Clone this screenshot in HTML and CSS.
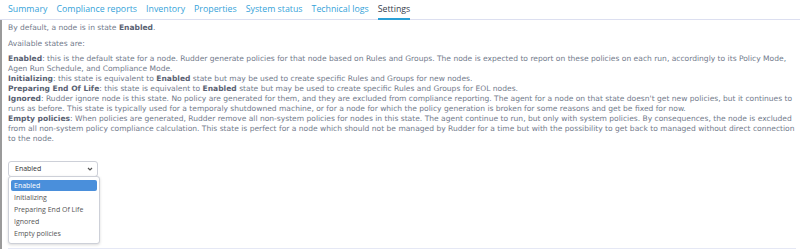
FILE: index.html
```html
<!DOCTYPE html>
<html lang="en">
<head>
    <meta charset="UTF-8">
    <title>Node settings</title>
    <link rel="stylesheet" href="styles.css">
</head>
<body>
    <ul class="tabs">
        <li><a href="#">Summary</a></li>
        <li><a href="#">Compliance reports</a></li>
        <li><a href="#">Inventory</a></li>
        <li><a href="#">Properties</a></li>
        <li><a href="#">System status</a></li>
        <li><a href="#">Technical logs</a></li>
        <li class="active"><a href="#">Settings</a></li>
    </ul>

    <div class="content">
        <p class="intro">By default, a node is in state <b>Enabled</b>.</p>
        <p>Available states are:</p>
        <p>
            <b>Enabled</b>: this is the default state for a node. Rudder generate policies for that node based on Rules and Groups. The node is expected to report on these policies on each run, accordingly to its Policy Mode, Agen Run Schedule, and Compliance Mode.<br>
            <b>Initializing</b>: this state is equivalent to <b>Enabled</b> state but may be used to create specific Rules and Groups for new nodes.<br>
            <b>Preparing End Of Life</b>: this state is equivalent to <b>Enabled</b> state but may be used to create specific Rules and Groups for EOL nodes.<br>
            <b>Ignored</b>: Rudder ignore node is this state. No policy are generated for them, and they are excluded from compliance reporting. The agent for a node on that state doesn't get new policies, but it continues to runs as before. This state is typically used for a temporaly shutdowned machine, or for a node for which the policy generation is broken for some reasons and get be fixed for now.<br>
            <b>Empty policies</b>: When policies are generated, Rudder remove all non-system policies for nodes in this state. The agent continue to run, but only with system policies. By consequences, the node is excluded from all non-system policy compliance calculation. This state is perfect for a node which should not be managed by Rudder for a time but with the possibility to get back to managed without direct connection to the node.
        </p>

        <div class="state-select">
            <div class="select-box">
                <span>Enabled</span>
                <svg width="6" height="4" viewBox="0 0 6 4"><path d="M1 1l2 2 2-2" fill="none" stroke="#555" stroke-width="1.2"/></svg>
            </div>
            <ul class="select-list">
                <li class="selected">Enabled</li>
                <li>Initializing</li>
                <li>Preparing End Of Life</li>
                <li>Ignored</li>
                <li>Empty policies</li>
            </ul>
        </div>

        <div class="footer-bar"></div>
    </div>
</body>
</html>
```

FILE: styles.css
```css
body {
    margin: 0;
    padding: 0;
    background-color: #fff;
    font-family: "DejaVu Sans", sans-serif;
    overflow: hidden;
}

.tabs {
    display: flex;
    gap: 9px;
    list-style: none;
    margin: 0;
    padding: 0 0 0 8px;
    height: 19px;
    border-bottom: 1px solid #dcdff0;
    font-family: "Open Sans", sans-serif;
    font-size: 8.8px;
}

.tabs li {
    display: flex;
    align-items: center;
    border-bottom: 2px solid transparent;
    margin-bottom: -1px;
}

.tabs a {
    color: #36a3d9;
    text-decoration: none;
}

.tabs .active {
    border-bottom-color: #2a9fd6;
}

.tabs .active a {
    color: #36404d;
}

.content {
    border-left: 2px solid #9a9a9a;
    padding: 3px 2px 0 6px;
    color: #727a8b;
    font-size: 7.55px;
    line-height: 10px;
}

.content p {
    margin: 0 0 5px;
}

.content .intro {
    margin-bottom: 6px;
}

.content b {
    color: #5a6273;
}

.state-select {
    position: relative;
    margin-top: 17px;
    width: 90px;
    font-family: "Open Sans", sans-serif;
    font-size: 7px;
    color: #333;
}

.select-box {
    display: flex;
    justify-content: space-between;
    align-items: center;
    height: 14px;
    padding: 0 4px 0 6px;
    border: 1px solid #cdd0d8;
    border-radius: 3px;
}

.select-list {
    position: absolute;
    top: 15px;
    left: 0;
    width: 86px;
    list-style: none;
    margin: 0;
    padding: 2px 2px 3px;
    background: #fff;
    border: 1px solid #cdd0d8;
    border-radius: 3px;
    box-shadow: 0 1px 3px rgba(0, 0, 0, 0.15);
    color: #555;
}

.select-list li {
    height: 12px;
    line-height: 12px;
    padding: 0 3px;
}

.select-list .selected {
    height: 11px;
    line-height: 11px;
    margin: 1px 0 1px;
    background: #4a8fdb;
    color: #fff;
    border-radius: 2px;
}

.footer-bar {
    margin-top: 71px;
    height: 4px;
    background: #e5e8f5;
    margin-right: 2px;
}
```
